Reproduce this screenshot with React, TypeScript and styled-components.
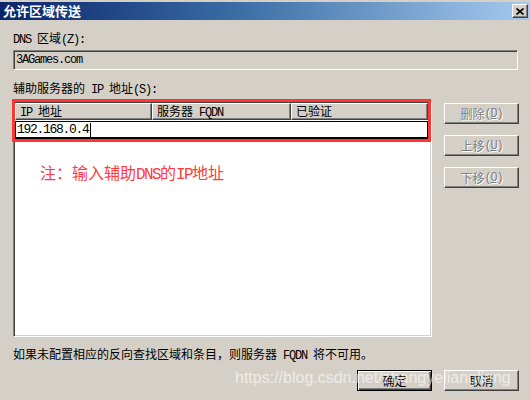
import React from "react";
import styled, { createGlobalStyle } from "styled-components";

const GlobalStyle = createGlobalStyle`
  html, body { margin: 0; padding: 0; background: #d4d0c8; }
  body {
    font-family: "Noto Sans CJK SC", "Liberation Sans", sans-serif;
    font-size: 12px;
    color: #000;
  }
`;

const Window = styled.div`
  position: relative;
  width: 530px;
  height: 400px;
  overflow: hidden;
  background: #d4d0c8;
  display: flex;
  flex-direction: column;
`;

const TitleBar = styled.div`
  margin-top: 2px;
  height: 18px;
  display: flex;
  align-items: center;
  justify-content: space-between;
  padding: 0 2px 0 3px;
  background: linear-gradient(to right, #0a246a 0%, #3a6ea5 45%, #a6caf0 100%);
`;

const Title = styled.span`
  color: #fff;
  font-weight: bold;
  font-size: 13px;
  line-height: 18px;
`;

const CloseButton = styled.div`
  width: 16px;
  height: 14px;
  box-sizing: border-box;
  background: #d4d0c8;
  border: 1px solid;
  border-color: #fff #404040 #404040 #fff;
  box-shadow: inset -1px -1px #808080;
  display: flex;
  align-items: center;
  justify-content: center;
`;

const Body = styled.div`
  flex: 1;
  display: flex;
  flex-direction: column;
  padding: 11px 11px 0 13px;
`;

const Label = styled.div<{ $top?: number }>`
  height: 14px;
  line-height: 14px;
  margin-top: ${(p) => p.$top ?? 0}px;
  white-space: nowrap;
`;

const Mono = styled.span`
  font-family: "Liberation Mono", monospace;
  letter-spacing: -0.1em;
`;

const Key = styled(Mono)`
  text-decoration: underline;
`;

const ReadOnlyField = styled.div`
  margin-top: 5px;
  width: 505px;
  height: 20px;
  box-sizing: border-box;
  border: 1px solid;
  border-color: #808080 #fff #fff #808080;
  box-shadow: inset 1px 1px #404040;
  background: #d4d0c8;
  display: flex;
  align-items: center;
  padding-left: 2px;
  line-height: 14px;
`;

const MainRow = styled.div`
  margin-top: 6px;
  display: flex;
  gap: 12px;
  height: 236px;
`;

const ListWrap = styled.div`
  position: relative;
  width: 419px;
  height: 236px;
`;

const ListView = styled.div`
  width: 100%;
  height: 100%;
  box-sizing: border-box;
  background: #fff;
  border: 1px solid;
  border-color: #808080 #fff #fff #808080;
  box-shadow: inset 1px 1px #404040, inset -1px -1px #d4d0c8;
  padding: 1px;
  display: flex;
  flex-direction: column;
`;

const HeaderRow = styled.div`
  display: flex;
  height: 17px;
`;

const HeaderCell = styled.div<{ $w: number }>`
  width: ${(p) => p.$w}px;
  box-sizing: border-box;
  background: #d4d0c8;
  border: 1px solid;
  border-color: #fff #404040 #404040 #fff;
  box-shadow: inset -1px -1px #808080;
  padding-left: 4px;
  line-height: 14px;
  white-space: nowrap;
`;

const EditRow = styled.div`
  margin-top: 1px;
  width: 413px;
  height: 18px;
  box-sizing: border-box;
  border: 1px solid #000;
  border-bottom-width: 2px;
  background: #fff;
  display: flex;
  align-items: center;
  padding-left: 1px;
  font-size: 13px;
`;

const Caret = styled.span`
  display: inline-block;
  width: 1px;
  height: 14px;
  background: #000;
  margin-left: 1px;
`;

const Note = styled.div`
  margin: 23px 0 0 25px;
  color: #ff3b3b;
  font-size: 16px;
  line-height: 20px;
  white-space: nowrap;
`;

const RedFrame = styled.div`
  position: absolute;
  left: -1px;
  top: -2px;
  width: 419px;
  height: 43px;
  box-sizing: border-box;
  border: 3px solid #ff3535;
  pointer-events: none;
`;

const ButtonColumn = styled.div`
  display: flex;
  flex-direction: column;
  gap: 11px;
  padding-top: 2px;
`;

const Button = styled.div<{ $disabled?: boolean; $default?: boolean }>`
  width: 75px;
  height: 21px;
  box-sizing: border-box;
  background: #d4d0c8;
  display: flex;
  align-items: center;
  justify-content: center;
  line-height: 14px;
  white-space: nowrap;
  border: 1px solid;
  border-color: ${(p) => (p.$default ? "#000" : "#fff #404040 #404040 #fff")};
  box-shadow: ${(p) =>
    p.$default
      ? "inset 1px 1px #fff, inset -1px -1px #404040, inset -2px -2px #808080"
      : "inset -1px -1px #808080"};
  color: ${(p) => (p.$disabled ? "#808080" : "#000")};
  text-shadow: ${(p) => (p.$disabled ? "1px 1px #fff" : "none")};
`;

const Footnote = styled.div`
  margin-top: 10px;
  height: 14px;
  line-height: 14px;
  white-space: nowrap;
`;

const Footer = styled.div`
  margin-top: 9px;
  display: flex;
  justify-content: flex-end;
  gap: 12px;
`;

const Watermark = styled.div`
  position: absolute;
  left: 235px;
  top: 369px;
  font-family: "Liberation Sans", Arial, sans-serif;
  font-size: 16px;
  line-height: 18px;
  color: rgba(255, 255, 255, 0.6);
  white-space: nowrap;
  pointer-events: none;
`;

function CloseGlyph() {
  return (
    <svg width="8" height="7" viewBox="0 0 8 7">
      <path d="M0.5 0.5 L7.5 6.5 M7.5 0.5 L0.5 6.5" stroke="#000" strokeWidth="1.7" fill="none" />
    </svg>
  );
}

export default function App() {
  return (
    <>
      <GlobalStyle />
      <Window>
        <TitleBar>
          <Title>允许区域传送</Title>
          <CloseButton>
            <CloseGlyph />
          </CloseButton>
        </TitleBar>
        <Body>
          <Label>
            <Mono>DNS </Mono>区域<Mono>(Z):</Mono>
          </Label>
          <ReadOnlyField>
            <Mono>3AGames.com</Mono>
          </ReadOnlyField>
          <Label $top={11}>
            辅助服务器的<Mono> IP </Mono>地址<Mono>(S):</Mono>
          </Label>
          <MainRow>
            <ListWrap>
              <ListView>
                <HeaderRow>
                  <HeaderCell $w={137}>
                    <Mono>IP </Mono>地址
                  </HeaderCell>
                  <HeaderCell $w={139}>
                    服务器<Mono> FQDN</Mono>
                  </HeaderCell>
                  <HeaderCell $w={137}>已验证</HeaderCell>
                </HeaderRow>
                <EditRow>
                  <Mono>192.168.0.4</Mono>
                  <Caret />
                </EditRow>
                <Note>
                  注：输入辅助<Mono>DNS</Mono>的<Mono>IP</Mono>地址
                </Note>
              </ListView>
              <RedFrame />
            </ListWrap>
            <ButtonColumn>
              <Button $disabled>
                删除<Mono>(</Mono><Key>D</Key><Mono>)</Mono>
              </Button>
              <Button $disabled>
                上移<Mono>(</Mono><Key>U</Key><Mono>)</Mono>
              </Button>
              <Button $disabled>
                下移<Mono>(</Mono><Key>O</Key><Mono>)</Mono>
              </Button>
            </ButtonColumn>
          </MainRow>
          <Footnote>
            如果未配置相应的反向查找区域和条目，则服务器<Mono> FQDN </Mono>将不可用。
          </Footnote>
          <Footer>
            <Button $default>确定</Button>
            <Button>取消</Button>
          </Footer>
        </Body>
        <Watermark>https://blog.csdn.net/zhangyeliangliang</Watermark>
      </Window>
    </>
  );
}
